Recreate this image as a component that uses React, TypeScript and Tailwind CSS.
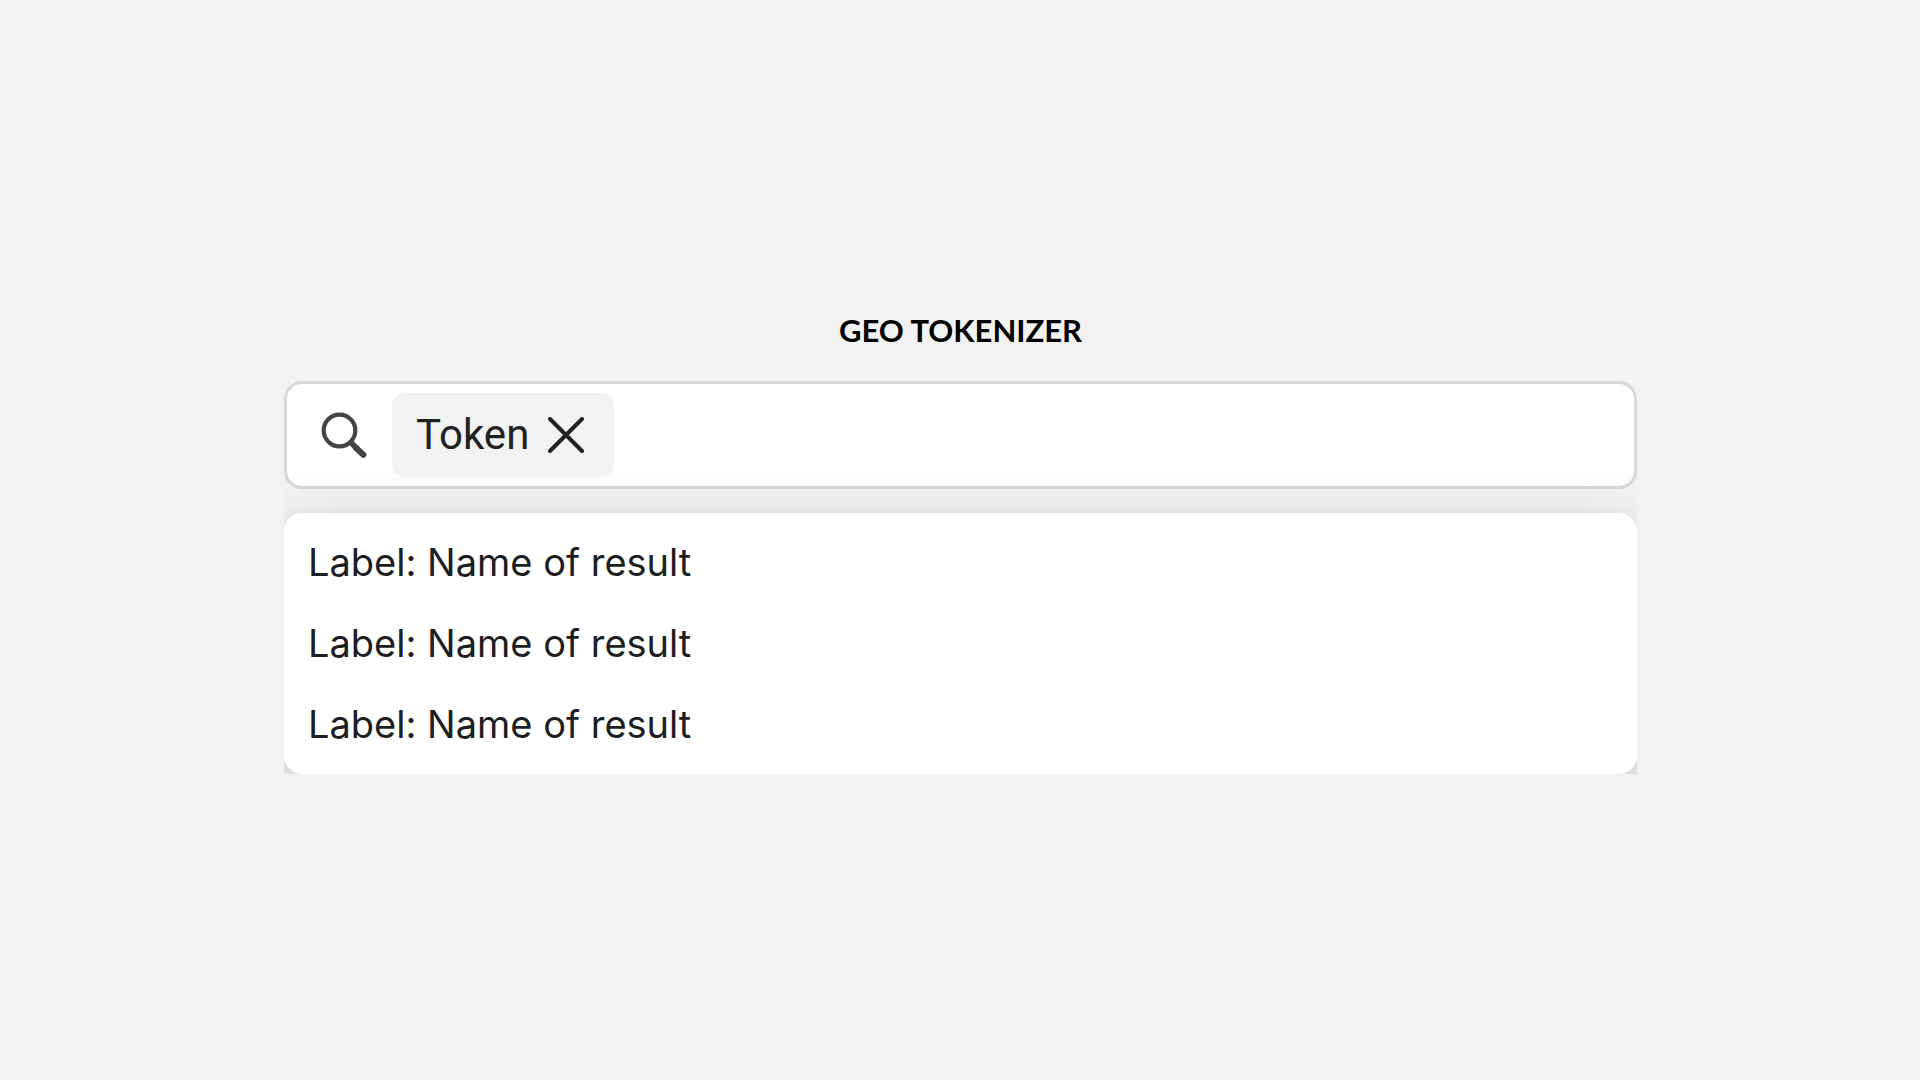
import { useState } from "react";

const results = [
  { id: 1, label: "Label", name: "Name of result" },
  { id: 2, label: "Label", name: "Name of result" },
  { id: 3, label: "Label", name: "Name of result" },
];

function SearchIcon() {
  return (
    <svg viewBox="0 0 48 48" className="size-12 shrink-0" fill="none" stroke="#444444" aria-hidden="true">
      <circle cx="20.5" cy="19.5" r="15.8" strokeWidth="4.2" />
      <path d="M32 31.5 L38 37.5" strokeWidth="5.6" strokeLinecap="round" />
      <path d="M37 37 L44.4 43.7" strokeWidth="6.2" strokeLinecap="round" />
    </svg>
  );
}

function CloseIcon() {
  return (
    <svg viewBox="0 0 36 36" className="size-9" fill="none" stroke="#222222" strokeWidth="4" strokeLinecap="round" aria-hidden="true">
      <path d="M2 2 L34 34 M34 2 L2 34" />
    </svg>
  );
}

function Token({ text, onRemove }: { text: string; onRemove: () => void }) {
  return (
    <span className="flex h-[84px] items-center rounded-xl bg-[#f2f2f2] pl-6 pr-[30px] font-[Roboto,sans-serif] text-[42px] leading-[48px] text-[#222222]">
      {text}
      <button type="button" aria-label={`Remove ${text}`} onClick={onRemove} className="ml-[19px]">
        <CloseIcon />
      </button>
    </span>
  );
}

export default function App() {
  const [tokens, setTokens] = useState(["Token"]);

  return (
    <main className="flex min-h-screen flex-col items-center justify-center bg-[#f2f2f2] pl-px">
      <section className="w-full max-w-[1353px] overflow-hidden">
        <h1 className="mb-[27px] text-center font-[Lato,sans-serif] text-[31px] font-bold leading-[48px] text-black">
          GEO TOKENIZER
        </h1>
        <div className="flex h-[108px] items-center rounded-[18px] border-3 border-[#d8d8d8] bg-white pl-8">
          <SearchIcon />
          <div className="ml-[25px] flex flex-1 items-center gap-3">
            {tokens.map((token) => (
              <Token key={token} text={token} onRemove={() => setTokens(tokens.filter((t) => t !== token))} />
            ))}
            <input
              type="text"
              aria-label="Search locations"
              className="h-20 min-w-0 flex-1 bg-transparent font-[Roboto,sans-serif] text-[42px] outline-none"
            />
          </div>
        </div>
        <ul className="mt-6 rounded-[18px] bg-white py-[9px] shadow-[0_24px_72px_rgba(0,0,0,0.17),0_3px_18px_rgba(0,0,0,0.06)]">
          {results.map((result) => (
            <li key={result.id}>
              <button
                type="button"
                className="block w-full px-6 text-left font-[Inter,sans-serif] text-[38px] leading-[81px] text-[#1c1e21]"
              >
                {result.label}: {result.name}
              </button>
            </li>
          ))}
        </ul>
      </section>
    </main>
  );
}
